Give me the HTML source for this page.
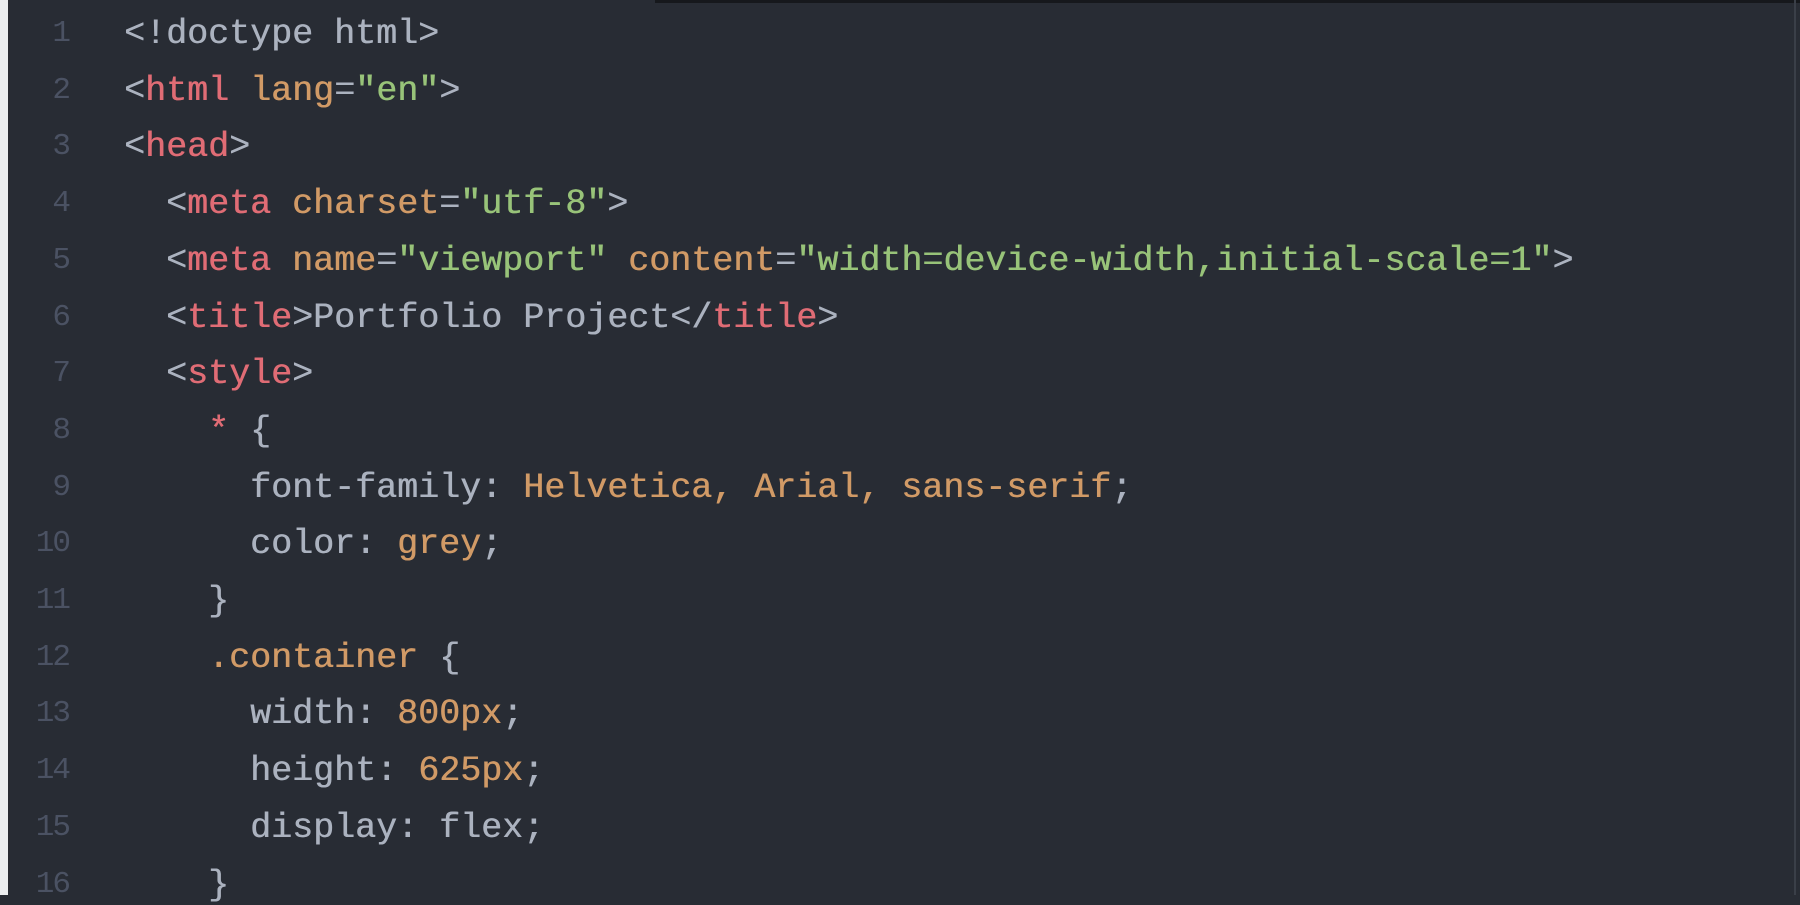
<!DOCTYPE html>
<html><head><style>
html,body{margin:0;padding:0;width:1800px;height:895px;overflow:hidden;background:#282c34;}
.lb{position:absolute;left:0;top:0;width:8px;height:895px;background:#eceef0;}
.tb{position:absolute;left:655px;top:0;width:1145px;height:3px;background:#16181c;}
.rb{position:absolute;left:1794px;top:0;width:2px;height:895px;background:#3a3f48;}
.ln{position:absolute;left:0;width:69px;text-align:right;font:31px "Liberation Mono",monospace;letter-spacing:-2px;color:#4b5263;}
.cd{position:absolute;left:124px;font:35px "Liberation Mono",monospace;color:#abb2bf;white-space:pre;text-shadow:0.5px 0 0 currentColor;}
.t{color:#e06c75}.a{color:#d19a66}.s{color:#98c379}.o{color:#d19a66}
</style></head><body>
<div class="lb"></div><div class="tb"></div><div class="rb"></div>
<div id="c"></div>
<script>
var L=[
'&lt;!doctype html&gt;',
'&lt;<span class="t">html</span> <span class="a">lang</span>=<span class="s">"en"</span>&gt;',
'&lt;<span class="t">head</span>&gt;',
'  &lt;<span class="t">meta</span> <span class="a">charset</span>=<span class="s">"utf-8"</span>&gt;',
'  &lt;<span class="t">meta</span> <span class="a">name</span>=<span class="s">"viewport"</span> <span class="a">content</span>=<span class="s">"width=device-width,initial-scale=1"</span>&gt;',
'  &lt;<span class="t">title</span>&gt;Portfolio Project&lt;/<span class="t">title</span>&gt;',
'  &lt;<span class="t">style</span>&gt;',
'    <span class="t">*</span> {',
'      font-family: <span class="o">Helvetica, Arial, sans-serif</span>;',
'      color: <span class="o">grey</span>;',
'    }',
'    <span class="o">.container</span> {',
'      width: <span class="o">800px</span>;',
'      height: <span class="o">625px</span>;',
'      display: flex;',
'    }'];
var h='';
for(var i=0;i<L.length;i++){var y=34+i*56.7;
h+='<div class="ln" style="top:'+(y-18)+'px">'+(i+1)+'</div><div class="cd" style="top:'+(y-20)+'px">'+L[i]+'</div>';}
document.getElementById('c').innerHTML=h;
</script>
</body></html>
